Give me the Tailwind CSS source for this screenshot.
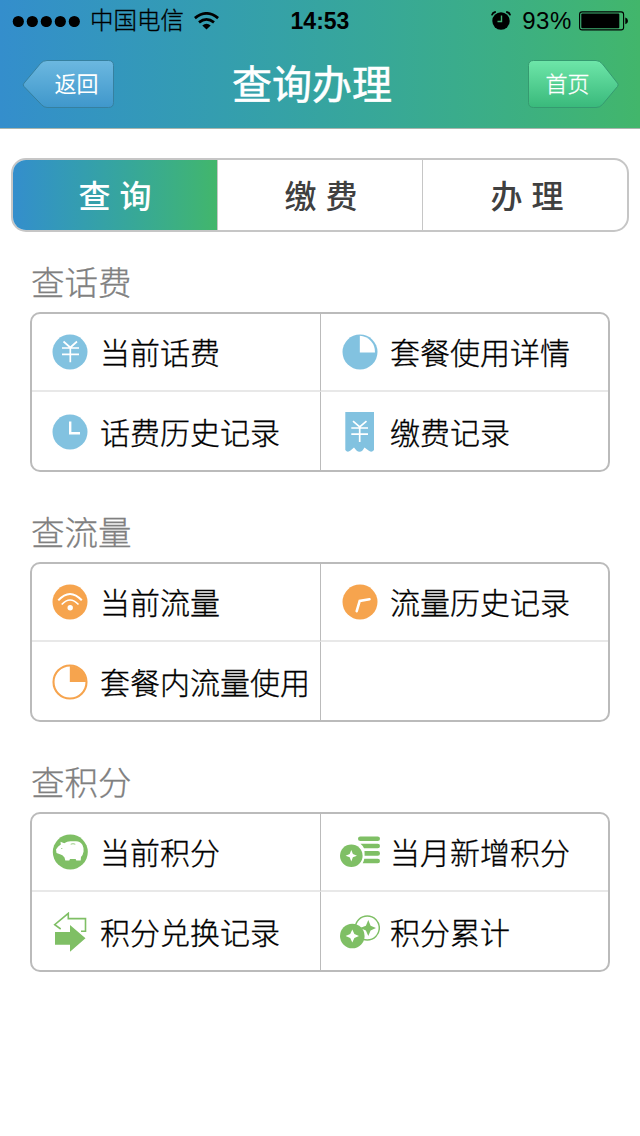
<!DOCTYPE html>
<html lang="zh-CN">

<head>
    <meta charset="UTF-8">
    <meta name="viewport" content="width=device-width, initial-scale=1.0">
    <title>查询办理</title>
    <script src="https://cdn.jsdelivr.net/npm/@tailwindcss/browser@4"></script>
</head>

<body class="bg-white font-['Liberation_Sans','Noto_Sans_CJK_SC',sans-serif]">

    <!-- Header -->
    <header class="h-[129px] border-b border-[#a9b5ad] bg-linear-to-r from-[#348ecc] to-[#42b66b]">

        <!-- Status bar -->
        <div class="grid h-10 grid-cols-3 items-center text-2xl leading-10 text-black">
            <div class="flex items-center pl-3">
                <svg class="h-3 w-[70px] shrink-0" viewBox="0 0 70 12">
                    <circle cx="6.3" cy="6.5" r="5.6" />
                    <circle cx="20.3" cy="6.5" r="5.6" />
                    <circle cx="34.3" cy="6.5" r="5.6" />
                    <circle cx="48.3" cy="6.5" r="5.6" />
                    <circle cx="62.3" cy="6.5" r="5.6" />
                </svg>
                <span class="ml-2 pt-px text-[23.5px] font-light whitespace-nowrap [-webkit-text-stroke:0.3px]">中国电信</span>
                <svg class="ml-2.5 h-[18px] w-[25px] shrink-0" viewBox="0 0 25 18" fill="none" stroke="#000" stroke-width="2.8">
                    <path d="M.9 6.2Q12.5-3.4 24.1 6.2" />
                    <path d="M5 10.4Q12.5 4.4 20 10.4" />
                    <path d="M12.5 17.6L8.3 13.4Q12.5 10 16.7 13.4Z" fill="#000" stroke="none" />
                </svg>
            </div>
            <span class="pt-px text-center text-[23px] font-bold">14:53</span>
            <div class="flex items-center justify-end pr-[11px]">
                <svg class="h-[19px] w-5" viewBox="0 0 20 19">
                    <circle cx="10" cy="10" r="8.7" />
                    <path d="M.8 4.4Q1.5 1.3 4.8.8M15.2.8Q18.5 1.3 19.2 4.4" fill="none" stroke="#000" stroke-width="1.8" />
                    <path d="M10.5 4.5V10.5H6.5" fill="none" stroke="#42b073" stroke-width="1.4" />
                </svg>
                <span class="ml-[11px] pt-px tracking-[0.6px]">93%</span>
                <svg class="ml-[7px] h-5 w-[50px]" viewBox="0 0 50 20">
                    <rect x=".6" y=".9" width="44" height="18" rx="2.5" fill="none" stroke="#000" stroke-width="1.1" />
                    <rect x="2.3" y="2.6" width="38" height="14.6" rx="1" />
                    <path d="M46.3 6.5Q49 7.5 49 9.9T46.3 13.3Z" />
                </svg>
            </div>
        </div>

        <!-- Title bar -->
        <div class="flex h-[88px] items-center justify-between px-[21px] text-white">
            <button class="relative h-12 w-[94px] pl-[17px] text-[22px]">
                <svg class="absolute inset-0 h-12 w-[94px]" viewBox="0 0 94 48">
                    <defs>
                        <linearGradient id="back" x2="0" y2="1">
                            <stop stop-color="#6cb8e0" />
                            <stop offset="1" stop-color="#3f97cb" />
                        </linearGradient>
                    </defs>
                    <path d="M26 .5H87.5Q92.5.5 92.5 5.5V42.5Q92.5 47.5 87.5 47.5H26Q23 47.5 20.5 44.7L3 26.5Q1.5 24.8 3 23.2L19.5 3.5Q22 .5 26 .5Z" fill="url(#back)" stroke="#36809f" />
                </svg>
                <span class="relative">返回</span>
            </button>
            <h1 class="mr-4 pt-0.5 text-[40px] leading-none font-normal [-webkit-text-stroke:0.5px_white]">查询办理</h1>
            <button class="relative h-12 w-[94px] pr-[9px] text-[22px]">
                <svg class="absolute inset-0 h-12 w-[94px]" viewBox="0 0 94 48">
                    <defs>
                        <linearGradient id="home" x2="0" y2="1">
                            <stop stop-color="#6ee6a9" />
                            <stop offset="1" stop-color="#39b97b" />
                        </linearGradient>
                    </defs>
                    <path d="M8.5.5H71Q74.5.5 77.5 4L92.5 23.2Q93.8 24.8 92.5 26.5L77.5 44.5Q75 47.5 71 47.5H8.5Q3.5 47.5 3.5 42.5V5.5Q3.5.5 8.5.5Z" fill="url(#home)" stroke="#359a70" />
                </svg>
                <span class="relative font-light [-webkit-text-stroke:0.3px]">首页</span>
            </button>
        </div>
    </header>

    <!-- Tabs -->
    <nav class="mx-[11px] mt-[29px] grid h-[74px] grid-cols-[205px_205px_1fr] overflow-hidden rounded-[15px] border-2 border-[#c6c6c6] text-center text-[32px] leading-[74px] font-medium text-[#404040]">
        <a class="border-r border-[#c6c6c6] bg-linear-to-r from-[#348ecc] to-[#42b66b] text-white">查 询</a>
        <a class="border-r border-[#c6c6c6] pl-0.5">缴 费</a>
        <a class="pl-1">办 理</a>
    </nav>

    <main class="px-[30px] font-light text-black [-webkit-text-stroke:0.3px]">

        <!-- Phone bill -->
        <section class="pt-[30px]">
            <h2 class="h-[50px] pl-px text-[33.5px] leading-[43px] text-[#808080]">查话费</h2>
            <div class="grid h-40 grid-cols-[289px_287px] grid-rows-2 overflow-hidden rounded-[10px] border-2 border-[#bbb] text-[30px] whitespace-nowrap">
                <a class="flex items-center gap-2.5 border-r border-b-2 border-r-[#bbb] border-b-[#e8e8e8] pl-[18px]">
                    <svg class="size-10 shrink-0" viewBox="0 0 40 40">
                        <circle cx="20" cy="20" r="17.5" fill="#82c2e0" />
                        <path d="M13.5 9.5L20.3 15.5L27 9.5M12 16H29M12 22.4H29M20.3 15.5V30.3" fill="none" stroke="#fff" stroke-width="1.7" />
                    </svg>
                    <span class="pt-0.5">当前话费</span>
                </a>
                <a class="flex items-center gap-2.5 border-b-2 border-[#e8e8e8] pl-[19px]">
                    <svg class="size-10 shrink-0" viewBox="0 0 40 40">
                        <circle cx="20" cy="20" r="17.5" fill="#82c2e0" />
                        <path d="M19.8 3.8A16 16 0 0 1 35 20.5H19.8Z" fill="#fff" />
                    </svg>
                    <span class="pt-0.5">套餐使用详情</span>
                </a>
                <a class="flex items-center gap-2.5 border-r border-[#bbb] pt-0.5 pl-[18px]">
                    <svg class="size-10 shrink-0" viewBox="0 0 40 40">
                        <circle cx="20" cy="20" r="17.5" fill="#82c2e0" />
                        <path d="M20.2 9.5V21.3H30" fill="none" stroke="#fff" stroke-width="2.4" />
                    </svg>
                    <span class="pt-0.5">话费历史记录</span>
                </a>
                <a class="flex items-center gap-2.5 pt-0.5 pl-[19px]">
                    <svg class="size-10 shrink-0" viewBox="0 0 40 40">
                        <path d="M5.3 0H34V38Q31.5 41 28.5 38.5L24.5 35.5L22.5 38.5Q19.5 41 16.5 38.5L14 35.5L10.5 38.5Q7.5 41 5.3 38Z" fill="#82c2e0" />
                        <path d="M13 9.2L19.7 15L26.5 9.2M11.3 16H28M11.3 22.2H28M19.7 15V30" fill="none" stroke="#fff" stroke-width="1.7" />
                    </svg>
                    <span class="pt-0.5">缴费记录</span>
                </a>
            </div>
        </section>

        <!-- Data usage -->
        <section class="pt-10">
            <h2 class="h-[50px] pl-px text-[33.5px] leading-[43px] text-[#808080]">查流量</h2>
            <div class="grid h-40 grid-cols-[289px_287px] grid-rows-2 overflow-hidden rounded-[10px] border-2 border-[#bbb] text-[30px] whitespace-nowrap">
                <a class="flex items-center gap-2.5 border-r border-b-2 border-r-[#bbb] border-b-[#e8e8e8] pl-[18px]">
                    <svg class="size-10 shrink-0" viewBox="0 0 40 40">
                        <circle cx="20" cy="20" r="17.5" fill="#f6a44e" />
                        <path d="M8.3 18.3Q20 5.5 31.8 18.3" fill="none" stroke="#fff" stroke-width="2" />
                        <path d="M11.7 22.5Q20 13.5 28.5 22.5" fill="none" stroke="#fff" stroke-width="1.6" />
                        <circle cx="20.2" cy="25.7" r="2.7" fill="#fff" />
                    </svg>
                    <span class="pt-0.5">当前流量</span>
                </a>
                <a class="flex items-center gap-2.5 border-b-2 border-[#e8e8e8] pl-[19px]">
                    <svg class="size-10 shrink-0" viewBox="0 0 40 40">
                        <circle cx="20" cy="20" r="17.5" fill="#f6a44e" />
                        <path d="M16.7 29.2L19.7 19L29.5 17.3" fill="none" stroke="#fff" stroke-width="2.6" stroke-linecap="round" />
                    </svg>
                    <span class="pt-0.5">流量历史记录</span>
                </a>
                <a class="flex items-center gap-2.5 border-r border-[#bbb] pt-0.5 pl-[18px]">
                    <svg class="size-10 shrink-0" viewBox="0 0 40 40">
                        <circle cx="20" cy="20" r="16.5" fill="none" stroke="#f6a44e" stroke-width="2.1" />
                        <path d="M19.8 4A16 16 0 0 1 36 20H19.8Z" fill="#f6a44e" />
                    </svg>
                    <span class="pt-0.5">套餐内流量使用</span>
                </a>
                <a></a>
            </div>
        </section>

        <!-- Points -->
        <section class="pt-10">
            <h2 class="h-[50px] pl-px text-[33.5px] leading-[43px] text-[#808080]">查积分</h2>
            <div class="grid h-40 grid-cols-[289px_287px] grid-rows-2 overflow-hidden rounded-[10px] border-2 border-[#bbb] text-[30px] whitespace-nowrap">
                <a class="flex items-center gap-2.5 border-r border-b-2 border-r-[#bbb] border-b-[#e8e8e8] pl-[18px]">
                    <svg class="size-10 shrink-0" viewBox="0 0 40 40">
                        <circle cx="20.3" cy="20" r="17.5" fill="#7fbf65" />
                        <path d="M6 17.5L8 14.8L10.8 12.5L10.5 9.8L14.2 11.2Q17 9.3 20.5 9.2H26Q30.5 9.5 32.5 13Q34 16 33.6 19.5Q33 23 31 25L30.7 28.4H26.3L25.6 26.9H20L19.3 28.6H15.3L14.5 25.6Q12.5 22.8 10 22.3L6.5 21Z" fill="#fff" />
                        <path d="M20.7 12.2Q23 11.2 25.3 12.2" fill="none" stroke="#7fbf65" stroke-width=".8" />
                        <circle cx="11.8" cy="16.5" r=".6" fill="#7fbf65" />
                    </svg>
                    <span class="pt-0.5">当前积分</span>
                </a>
                <a class="flex items-center gap-2.5 border-b-2 border-[#e8e8e8] pl-[19px]">
                    <svg class="size-10 shrink-0" viewBox="0 0 40 40" fill="#7fbf65">
                        <circle cx="11.3" cy="23.7" r="11.3" />
                        <path d="M11.3 18L12.9 22.1L17 23.7L12.9 25.3L11.3 29.4L9.7 25.3L5.6 23.7L9.7 22.1Z" fill="#fff" />
                        <rect x="18" y="4.5" width="22" height="4.6" rx="2.3" />
                        <path d="M20.5 11.7H37.7A2.3 2.3 0 0 1 37.7 16.3H24Q23 13.7 20.5 11.7Z" />
                        <path d="M24.5 19.1H37.7A2.3 2.3 0 0 1 37.7 23.7H24.6Z" />
                        <path d="M24.3 26.7H37.7A2.3 2.3 0 0 1 37.7 31.3H22.7Q23.9 29 24.3 26.7Z" />
                    </svg>
                    <span class="pt-0.5">当月新增积分</span>
                </a>
                <a class="flex items-center gap-2.5 border-r border-[#bbb] pt-0.5 pl-[18px]">
                    <svg class="size-10 shrink-0" viewBox="0 0 40 40">
                        <path d="M10.7 17L4.7 12.7L18.3 1.3V6.6H35.5V19.2H31" fill="none" stroke="#7fbf65" stroke-width="1.6" />
                        <path d="M5 20H20V13L35.5 26.3L20 39.7V32.7H5Z" fill="#7fbf65" />
                    </svg>
                    <span class="pt-0.5">积分兑换记录</span>
                </a>
                <a class="flex items-center gap-2.5 pt-0.5 pl-[19px]">
                    <svg class="size-10 shrink-0" viewBox="0 0 40 40" fill="#7fbf65">
                        <circle cx="27.3" cy="16" r="12" fill="none" stroke="#7fbf65" stroke-width="1.5" />
                        <path d="M28.3 8L30.6 13.7L36 16L30.6 18.4L28.3 24L25.9 18.4L20 16L25.9 13.7Z" />
                        <circle cx="12.3" cy="24" r="12.3" />
                        <path d="M12.3 17.5L14.4 21.9L19 24L14.4 26.1L12.3 30.5L10.2 26.1L5.6 24L10.2 21.9Z" fill="#fff" />
                    </svg>
                    <span class="pt-0.5">积分累计</span>
                </a>
            </div>
        </section>
    </main>

</body>

</html>
